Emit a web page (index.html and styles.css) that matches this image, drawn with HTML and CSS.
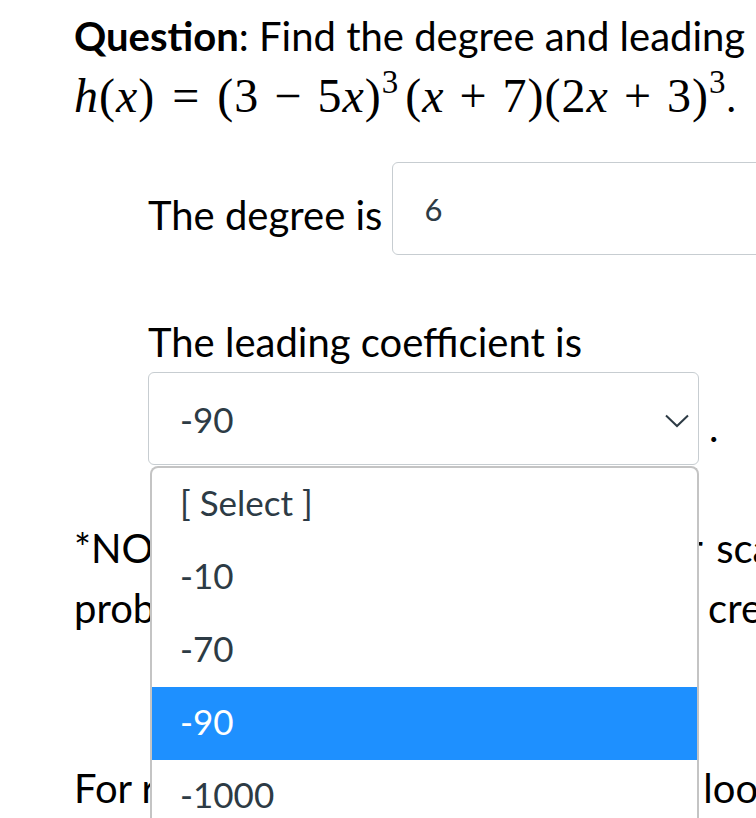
FILE: index.html
```html
<!DOCTYPE html>
<html lang="en">
  <head>
    <meta charset="UTF-8" />
    <meta name="viewport" content="width=device-width, initial-scale=1" />
    <title>Quiz Question</title>
    <link rel="stylesheet" href="styles.css">
  </head>
  <body>
    <main class="question">
      <p class="q-text">
        <strong>Question</strong>: Find the degree and leading coefficient of the polynomial<br />
        <span class="math"><i>h</i>(<i>x</i>)<span class="rel">=</span>(3<span class="bin">&minus;</span>5<i>x</i>)<sup>3</sup><span class="thin"></span>(<i>x</i><span class="bin">+</span>7)(2<i>x</i><span class="bin">+</span>3)<sup>3</sup></span>.
      </p>

      <div class="answer-row">
        <span class="label">The degree is</span>
        <input class="answer-input" type="text" value="6" />
      </div>

      <div class="answer-block">
        <p class="label-line">The leading coefficient is</p>
        <div class="select-row">
          <div class="select-box">
            <span>-90</span>
            <svg class="chevron" width="24" height="14" viewBox="0 0 24 14">
              <polyline points="1,1.5 12,12 23,1.5" fill="none" stroke="#2d3b45" stroke-width="2" />
            </svg>
          </div>
          <span class="period">.</span>
          <ul class="dropdown">
            <li>[ Select ]</li>
            <li>-10</li>
            <li>-70</li>
            <li class="active">-90</li>
            <li>-1000</li>
          </ul>
        </div>
      </div>

      <p class="note">
        *NOTE: You may want to use a ruler <span class="nudge">scale</span><br />
        problems worked by hand to obtain <span class="nudge">credit</span>
      </p>
      <p class="note">
        For review of such concepts, please look
      </p>
    </main>
  </body>
</html>
```

FILE: styles.css
```css
body {
  font-family: "Lato", "Noto Sans", sans-serif;
  font-size: 40px;
  color: #000;
  background: #fff;
  margin: 0;
  padding: 6px 0 0 0;
  overflow: hidden;
  height: 812px;
}
.question {
  padding-left: 74px;
}
p {
  margin: 0;
  line-height: 60px;
  white-space: nowrap;
}
.q-text strong {
  font-weight: 700;
}
.math {
  font-family: "Liberation Serif", "DejaVu Serif", serif;
  font-size: 48px;
  line-height: 60px;
  letter-spacing: 1px;
}
.math i {
  font-style: italic;
}
.math sup {
  font-size: 33px;
  line-height: 0;
  vertical-align: 19px;
}
.rel {
  margin: 0 17px;
}
.bin {
  margin: 0 15px;
}
.thin {
  margin-left: 6px;
}
.answer-row {
  display: flex;
  align-items: center;
  margin-top: 35px;
  padding-left: 74px;
}
.label {
  line-height: 60px;
  padding-top: 12px;
  margin-right: 10px;
  white-space: nowrap;
  flex-shrink: 0;
}
.answer-input {
  width: 420px;
  height: 93px;
  box-sizing: border-box;
  border: 1px solid #c7cdd1;
  border-radius: 6px;
  padding: 0 0 0 31px;
  font-family: "Lato", sans-serif;
  font-size: 31px;
  color: #2d3b45;
  flex-shrink: 0;
}
.answer-block {
  margin-top: 57px;
  padding-left: 74px;
}
.select-row {
  position: relative;
  display: flex;
  align-items: flex-end;
}
.select-box {
  width: 551px;
  height: 93px;
  box-sizing: border-box;
  border: 1px solid #c7cdd1;
  border-radius: 6px;
  padding: 0 9px 0 31px;
  display: flex;
  align-items: center;
  justify-content: space-between;
  color: #2d3b45;
  font-size: 35px;
  line-height: 60px;
}
.chevron {
  margin-top: 4px;
}
.period {
  line-height: 60px;
  margin: 0 0 8px 10px;
}
.dropdown {
  position: absolute;
  top: 94px;
  left: 2px;
  width: 549px;
  box-sizing: border-box;
  margin: 0;
  padding: 0;
  list-style: none;
  background: #fff;
  border: 2px solid #c4c4c4;
  border-bottom: none;
  border-radius: 8px 8px 0 0;
  color: #2d3b45;
  font-size: 35px;
  z-index: 2;
}
.dropdown li {
  height: 73px;
  line-height: 69px;
  padding-left: 28px;
}
.dropdown li.active {
  background: #1e90ff;
  color: #fff;
}
.note {
  margin-top: 53px;
}
.note + .note {
  margin-top: 120px;
}
.nudge {
  margin-left: 4px;
}
```
